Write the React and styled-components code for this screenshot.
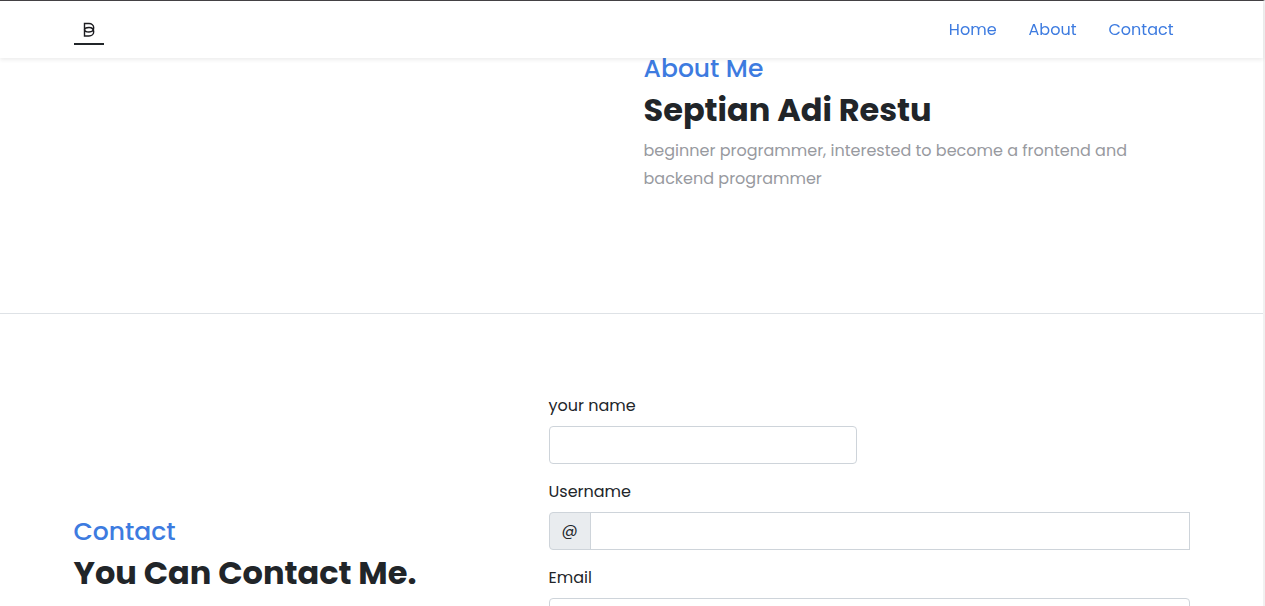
import React from "react";
import styled, { createGlobalStyle } from "styled-components";

const GlobalStyle = createGlobalStyle`
  *, *::before, *::after { box-sizing: border-box; }
  body {
    margin: 0;
    background: #fff;
    color: #212529;
    font-family: Poppins, Inter, "Liberation Sans", sans-serif;
    font-size: 16px;
    line-height: 24px;
  }
  h2, h3, p { margin: 0; }
`;

const Window = styled.div`
  height: 100vh;
  overflow-y: auto;
  scrollbar-width: none;
  border-top: 1px solid #444245;
  border-right: 2px solid #f1f1f1;
`;

const Container = styled.div`
  width: 100%;
  max-width: 1140px;
  margin: 0 auto;
  padding: 0 12px;
`;

const Header = styled.header`
  position: fixed;
  top: 1px;
  left: 0;
  right: 2px;
  z-index: 10;
  background: #fff;
  box-shadow: 0 2px 4px rgba(0, 0, 0, 0.075);
`;

const HeaderRow = styled(Container)`
  display: flex;
  align-items: center;
  justify-content: space-between;
  height: 57px;
`;

const Brand = styled.a`
  display: flex;
  width: 30px;
  height: 30px;
`;

const Nav = styled.nav`
  display: flex;
`;

const NavLink = styled.a`
  padding: 8px 16px;
  color: #3d7be0;
  text-decoration: none;
`;

const AboutSection = styled.section`
  padding: 53px 0 120px;
  border-bottom: 1px solid #dee2e6;
`;

const ContactSection = styled.section`
  padding: 80px 0;
`;

const Columns = styled.div`
  display: grid;
  grid-template-columns: ${({ $columns }) => $columns};
  column-gap: 24px;
  align-items: center;
`;

const Intro = styled.div`
  grid-column: ${({ $column }) => $column};
`;

const Eyebrow = styled.h3`
  margin-bottom: 8px;
  color: #3d7be0;
  font-size: 25px;
  font-weight: 500;
  line-height: 29px;
`;

const Title = styled.h2`
  margin-bottom: 8px;
  font-size: 32px;
  font-weight: 700;
  line-height: 38px;
`;

const Lead = styled.p`
  color: #989a9f;
  line-height: 28px;
`;

const Form = styled.form`
  display: grid;
  grid-template-columns: 1fr 1fr;
  gap: 16px 24px;
  padding-bottom: 86px;
`;

const Field = styled.div`
  display: flex;
  flex-direction: column;
  gap: 8px;
  grid-column: ${({ $wide }) => ($wide ? "1 / -1" : "auto")};
`;

const Input = styled.input`
  width: 100%;
  height: 38px;
  padding: 6px 12px;
  border: 1px solid #ced4da;
  border-radius: ${({ $grouped }) => ($grouped ? "0" : "4px")};
  background: #fff;
  color: inherit;
  font: inherit;
`;

const InputGroup = styled.div`
  display: flex;
`;

const Prefix = styled.span`
  display: flex;
  align-items: center;
  justify-content: center;
  flex: none;
  width: 42px;
  margin-right: -1px;
  border: 1px solid #ced4da;
  border-radius: 4px 0 0 4px;
  background: #e9ecef;
`;

function Logo() {
  return (
    <svg width="30" height="30" viewBox="0 0 30 30" fill="none" aria-hidden="true">
      <g stroke="#1c1c20" strokeWidth="1.4">
        <path d="M10.500 14.500v-6h4.500c2.700 0 4.700 1.900 4.700 4.300s-1.900 4.200-4.700 4.200c-2.500 0-4.500-.9-4.500-2.500" />
        <path d="M10.500 14.500v6.500h4.500c2.700 0 4.700-1.900 4.700-4.300s-1.900-4.200-4.700-4.200c-2.500 0-4.500.8-4.500 2.400" />
      </g>
      <path d="M0 29h30" stroke="#212529" strokeWidth="2" />
    </svg>
  );
}

export default function App() {
  return (
    <>
      <GlobalStyle />
      <Window>
        <Header>
          <HeaderRow>
            <Brand href="#home" aria-label="Home">
              <Logo />
            </Brand>
            <Nav>
              <NavLink href="#home">Home</NavLink>
              <NavLink href="#about">About</NavLink>
              <NavLink href="#contact">Contact</NavLink>
            </Nav>
          </HeaderRow>
        </Header>
        <main>
          <AboutSection id="about">
            <Container>
              <Columns $columns="1fr 1fr">
                <Intro $column="2">
                  <Eyebrow>About Me</Eyebrow>
                  <Title>Septian Adi Restu</Title>
                  <Lead>
                    beginner programmer, interested to become a frontend and
                    backend programmer
                  </Lead>
                </Intro>
              </Columns>
            </Container>
          </AboutSection>
          <ContactSection id="contact">
            <Container>
              <Columns $columns="451fr 641fr">
                <Intro $column="1">
                  <Eyebrow>Contact</Eyebrow>
                  <Title>You Can Contact Me.</Title>
                </Intro>
                <Form>
                  <Field>
                    <label htmlFor="name">your name</label>
                    <Input id="name" type="text" />
                  </Field>
                  <Field $wide>
                    <label htmlFor="username">Username</label>
                    <InputGroup>
                      <Prefix>@</Prefix>
                      <Input id="username" type="text" $grouped />
                    </InputGroup>
                  </Field>
                  <Field $wide>
                    <label htmlFor="email">Email</label>
                    <Input id="email" type="email" />
                  </Field>
                </Form>
              </Columns>
            </Container>
          </ContactSection>
        </main>
      </Window>
    </>
  );
}
